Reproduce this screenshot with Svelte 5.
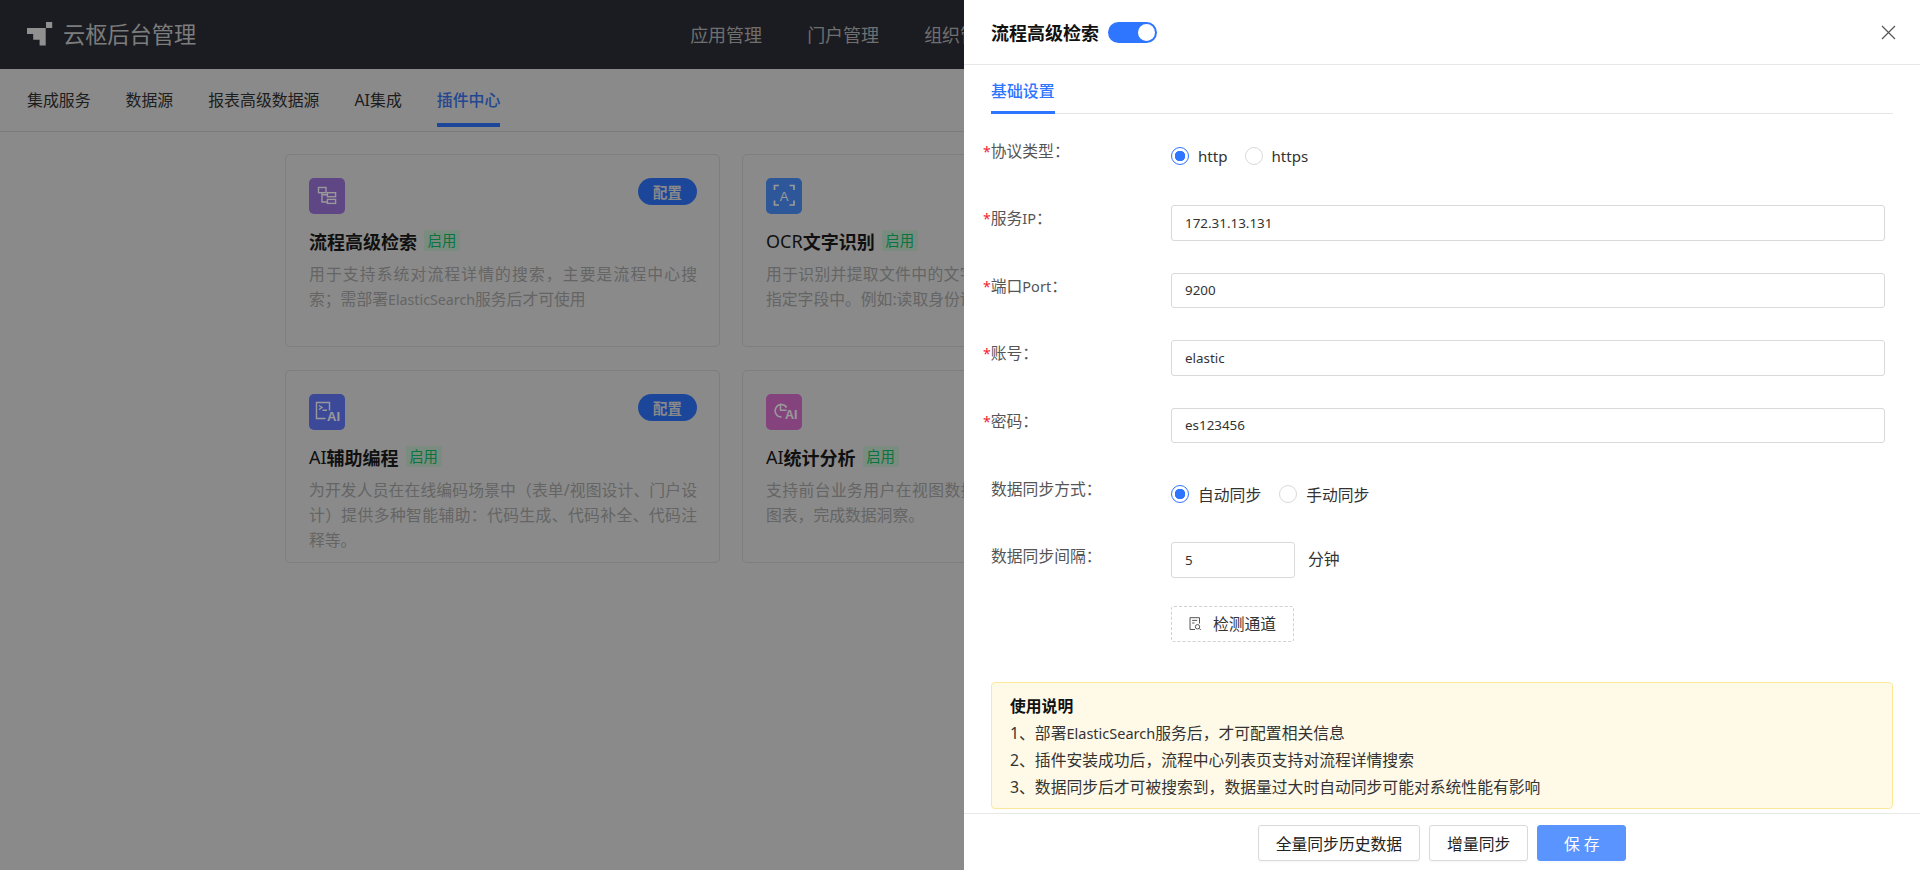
<script>
  const tabs = ["集成服务", "数据源", "报表高级数据源", "AI集成", "插件中心"];
  const menus = ["应用管理", "门户管理", "组织管理"];

  const plugins = [
    {
      key: "search",
      color: "#9e76de",
      title: "流程高级检索",
      desc: "用于支持系统对流程详情的搜索，主要是流程中心搜索；需部署ElasticSearch服务后才可使用",
      config: true,
    },
    {
      key: "ocr",
      color: "#4e91ff",
      title: "OCR文字识别",
      desc: "用于识别并提取文件中的文字信息，并将其自动填入到指定字段中。例如:读取身份证信息。",
      config: false,
    },
    {
      key: "code",
      color: "#647bff",
      title: "AI辅助编程",
      desc: "为开发人员在在线编码场景中（表单/视图设计、门户设计）提供多种智能辅助：代码生成、代码补全、代码注释等。",
      config: true,
    },
    {
      key: "chart",
      color: "#de71d2",
      title: "AI统计分析",
      desc: "支持前台业务用户在视图数据中通过AI生成多种类统计图表，完成数据洞察。",
      config: false,
    },
  ];

  const fields = [
    { label: "服务IP：", value: "172.31.13.131" },
    { label: "端口Port：", value: "9200" },
    { label: "账号：", value: "elastic" },
    { label: "密码：", value: "es123456" },
  ];

  // latin runs are set a bit smaller than the cjk around them
  const runs = (s) => s.split(/([A-Za-z]{2,})/).filter(Boolean);
  const isLatin = (s) => /^[A-Za-z]+$/.test(s);

  let protocol = $state("http");
  let syncMode = $state("auto");
  let enabled = $state(true);
</script>

{#snippet mixed(text)}{#each runs(text) as r}<span class:latin={isLatin(r)}>{r}</span>{/each}{/snippet}

<div class="page">
  <header class="topbar">
    <div class="brand">
      <svg width="26" height="24" viewBox="0 0 26 24" fill="#f0f0f0">
        <path d="M0 6H18.7V23.5H12.6V17.7H6.2V12H0Z" />
        <rect x="19" y="0" width="6.2" height="6" />
      </svg>
      <span>云枢后台管理</span>
    </div>
    <nav class="menu">
      {#each menus as item}
        <span>{item}</span>
      {/each}
    </nav>
  </header>

  <div class="subtabs">
    {#each tabs as tab, i}
      <span class="subtab" class:active={i === 4}>{tab}</span>
    {/each}
  </div>

  <main class="grid">
    {#each plugins as p}
      <section class="card">
        <div class="card-head">
          <div class="plugin-icon" style="background:{p.color}">
            <svg width="36" height="36" viewBox="0 0 36 36" fill="none" stroke="#fff" stroke-width="1.4">
              {#if p.key === "search"}
                <rect x="9.5" y="9.5" width="7.5" height="5.2" />
                <path d="M13 14.7V24H18.3M13 16.8H18.3" />
                <rect x="18.4" y="14.7" width="8.2" height="4" />
                <rect x="18.4" y="21.4" width="8.2" height="4" />
              {:else if p.key === "ocr"}
                <path d="M8.5 12V7.5H13M23.5 7.5H28V12M28 22.5V27H23.5M13 27H8.5V22.5" stroke-width="1.7" />
                <text x="18.2" y="22.5" text-anchor="middle" class="glyph" font-size="13">A</text>
              {:else if p.key === "code"}
                <path d="M20.5 16.5V8.5H7.5V24.5H16.5M10 11.5L13 13.5L10 15.5M13.5 16.3H18" />
                <text x="18" y="26.5" class="glyph bold" font-size="13">AI</text>
              {:else}
                <path d="M20.6 13.5A6.2 6.2 0 1 0 15.5 23M14.5 9.5V16.2H20.5" stroke-width="1.5" />
                <text x="19" y="24.5" class="glyph bold" font-size="12.5">AI</text>
              {/if}
            </svg>
          </div>
          {#if p.config}
            <button class="config">配置</button>
          {/if}
        </div>
        <h3 class="card-title">{@render mixed(p.title)}<em class="status">启用</em></h3>
        <p class="card-desc">{@render mixed(p.desc)}</p>
      </section>
    {/each}
  </main>
</div>

<div class="mask"></div>

<aside class="drawer">
  <div class="drawer-head">
    <strong>流程高级检索</strong>
    <button class="switch" class:off={!enabled} aria-label="启用" onclick={() => (enabled = !enabled)}>
      <i></i>
    </button>
    <button class="close" aria-label="关闭">
      <svg width="15" height="15" viewBox="0 0 15 15" stroke="#555" stroke-width="1.2" fill="none">
        <path d="M1 1L14 14M14 1L1 14" />
      </svg>
    </button>
  </div>

  <div class="drawer-body">
    <div class="drawer-tabs"><span>基础设置</span></div>

    <div class="row">
      <label class="field-label"><b>*</b>协议类型：</label>
      <div class="radios">
        {#each ["http", "https"] as opt}
          <button class="radio proto" class:checked={protocol === opt} onclick={() => (protocol = opt)}>
            <i></i>{opt}
          </button>
        {/each}
      </div>
    </div>

    {#each fields as f}
      <div class="row">
        <label class="field-label"><b>*</b>{@render mixed(f.label)}</label>
        <input class="text" value={f.value} />
      </div>
    {/each}

    <div class="row">
      <label class="field-label plain">数据同步方式：</label>
      <div class="radios wide">
        <button class="radio" class:checked={syncMode === "auto"} onclick={() => (syncMode = "auto")}>
          <i></i>自动同步
        </button>
        <button class="radio" class:checked={syncMode === "manual"} onclick={() => (syncMode = "manual")}>
          <i></i>手动同步
        </button>
      </div>
    </div>

    <div class="row short">
      <label class="field-label plain">数据同步间隔：</label>
      <input class="text number" value="5" />
      <span class="unit">分钟</span>
    </div>

    <div class="row check">
      <button class="dashed">
        <svg width="13" height="14" viewBox="0 0 13 14" fill="none" stroke="#555" stroke-width="1">
          <path d="M6 12.5H1V0.7H10.5V6.5M3.2 3.4H8.2M3.2 6H5.5" />
          <circle cx="8.5" cy="9.8" r="2.2" />
          <path d="M10.2 11.4L11.8 13" />
        </svg>
        检测通道
      </button>
    </div>

    <div class="notice">
      <h4>使用说明</h4>
      <p>{@render mixed("1、部署ElasticSearch服务后，才可配置相关信息")}</p>
      <p>2、插件安装成功后，流程中心列表页支持对流程详情搜索</p>
      <p>3、数据同步后才可被搜索到，数据量过大时自动同步可能对系统性能有影响</p>
    </div>
  </div>

  <div class="drawer-foot">
    <button class="btn">全量同步历史数据</button>
    <button class="btn">增量同步</button>
    <button class="btn primary">保 存</button>
  </div>
</aside>

<style>
  :global(body) {
    margin: 0;
    overflow: hidden;
    font-family: "Noto Sans", "Noto Sans CJK SC", sans-serif;
    color: #333;
  }
  button {
    font: inherit;
    cursor: pointer;
  }
  .latin {
    font-size: 0.92em;
  }

  .page {
    height: 100vh;
    background: #e6e6e6;
  }
  .topbar {
    height: 69px;
    display: flex;
    align-items: center;
    padding: 0 27px 2px;
    background: #2d2f39;
    box-sizing: border-box;
  }
  .brand {
    display: flex;
    align-items: center;
    gap: 10px;
    color: #cfcfcf;
    font-size: 22.2px;
    white-space: nowrap;
  }
  .menu {
    display: flex;
    gap: 45px;
    margin-left: 494px;
    color: #b9b9b9;
    font-size: 18px;
    white-space: nowrap;
  }

  .subtabs {
    height: 62px;
    display: flex;
    gap: 35px;
    padding: 0 27px;
    border-bottom: 1px solid #cdcdcd;
  }
  .subtab {
    box-sizing: border-box;
    height: 58px;
    line-height: 62px;
    font-size: 15.9px;
    color: #333;
  }
  .subtab.active {
    color: #3b76f0;
    font-weight: 500;
    border-bottom: 4px solid #2f76ff;
  }

  .grid {
    width: 1350px;
    margin: 22px auto 0;
    display: grid;
    grid-template-columns: 435px 434px;
    grid-auto-rows: 193px;
    gap: 23px 22px;
  }
  .card {
    box-sizing: border-box;
    padding: 23px 22px 23px 23px;
    border: 1px solid #d2d2d2;
    border-radius: 5px;
  }
  .card-head {
    display: flex;
    justify-content: space-between;
    align-items: flex-start;
  }
  .plugin-icon {
    width: 36px;
    height: 36px;
    border-radius: 5px;
  }
  .plugin-icon svg {
    display: block;
  }
  .glyph {
    fill: #fff;
    stroke: none;
    font-family: "Liberation Sans", sans-serif;
  }
  .glyph.bold {
    font-weight: 700;
  }
  .config {
    width: 59px;
    height: 27px;
    padding: 0;
    border: 0;
    border-radius: 14px;
    background: #2f76ff;
    color: #e4e4e4;
    font-size: 14.4px;
    font-weight: 700;
  }
  .card-title {
    display: flex;
    align-items: center;
    margin: 16px 0 0;
    height: 21px;
    font-size: 18px;
    font-weight: 600;
    color: #1c1c1c;
  }
  .card-title .latin {
    font-size: 1em;
    font-weight: 400;
  }
  .status {
    margin-left: 7px;
    padding: 0 3.6px;
    height: 21px;
    line-height: 21px;
    font-size: 14.4px;
    font-style: normal;
    font-weight: 400;
    color: #12c268;
    background: #cbe9d5;
    border-radius: 2px;
  }
  .card-desc {
    margin: 11px 0 0;
    font-size: 15.8px;
    line-height: 25px;
    text-align: justify;
    color: #a8a8a8;
  }
  .card-desc .latin {
    font-size: 0.9em;
  }

  .mask {
    position: fixed;
    inset: 0;
    background: rgba(0, 0, 0, 0.4);
  }

  .drawer {
    position: fixed;
    top: 0;
    right: 0;
    width: 956px;
    height: 100vh;
    display: flex;
    flex-direction: column;
    background: #fff;
  }
  .drawer-head {
    height: 65px;
    flex: none;
    box-sizing: border-box;
    display: flex;
    align-items: center;
    padding: 0 24px 0 27px;
    border-bottom: 1px solid #e8e8e8;
  }
  .drawer-head strong {
    font-size: 18px;
    font-weight: 600;
    color: #111;
  }
  .switch {
    position: relative;
    width: 49px;
    height: 21px;
    margin-left: 9px;
    padding: 0;
    border: 0;
    border-radius: 11px;
    background: #2e75ff;
  }
  .switch i {
    position: absolute;
    top: 2px;
    right: 2px;
    width: 17px;
    height: 17px;
    border-radius: 50%;
    background: #fff;
  }
  .switch.off {
    background: #bbb;
  }
  .switch.off i {
    right: 30px;
  }
  .close {
    margin-left: auto;
    padding: 0;
    border: 0;
    background: none;
    line-height: 0;
  }

  .drawer-body {
    flex: 1;
    min-height: 0;
    padding: 0 27px;
    border-bottom: 1px solid #e8e8e8;
    overflow: hidden;
  }
  .drawer-tabs {
    height: 48px;
    margin-bottom: 24px;
    border-bottom: 1px solid #e4e4e4;
  }
  .drawer-tabs span {
    display: inline-block;
    box-sizing: border-box;
    height: 49px;
    line-height: 53px;
    font-size: 15.9px;
    font-weight: 500;
    color: #2e75ff;
    border-bottom: 3px solid #2e75ff;
  }

  .row {
    display: flex;
    align-items: center;
    height: 35.4px;
    margin-bottom: 32px;
    padding-right: 8px;
  }
  .field-label {
    flex: none;
    width: 180px;
    align-self: flex-start;
    line-height: 27px;
    font-size: 15.8px;
    color: #555;
  }
  .field-label.plain {
    line-height: 29px;
  }
  .field-label b {
    margin-left: -8px;
    color: #f5222d;
    font-weight: 400;
    font-size: 14px;
  }

  .radios {
    display: flex;
    gap: 17px;
    padding-top: 1px;
  }
  .radios.wide {
    gap: 18px;
    padding-top: 3px;
  }
  .radio {
    display: flex;
    align-items: center;
    gap: 9px;
    padding: 0;
    border: 0;
    background: none;
    font-size: 15.8px;
    color: #333;
  }
  .radio.proto {
    font-size: 15.1px;
  }
  .radio i {
    box-sizing: border-box;
    width: 18px;
    height: 18px;
    border: 1px solid #d9d9d9;
    border-radius: 50%;
  }
  .radio.checked i {
    border-color: #2e75ff;
    background: radial-gradient(circle, #2e75ff 0 5px, #fff 5.5px);
  }

  .text {
    flex: 1;
    box-sizing: border-box;
    height: 35.4px;
    padding: 0 13px;
    border: 1px solid #d9d9d9;
    border-radius: 3px;
    outline: none;
    font: inherit;
    font-size: 13.4px;
    color: #333;
  }
  .text.number {
    flex: none;
    width: 124px;
  }
  .unit {
    margin: 0 0 3px 13px;
    font-size: 15.8px;
    color: #333;
  }

  .row.short {
    margin-bottom: 28px;
  }
  .row.check {
    height: 36px;
    padding-left: 180px;
    margin-bottom: 40px;
  }
  .dashed {
    display: flex;
    align-items: center;
    justify-content: center;
    gap: 11px;
    box-sizing: border-box;
    width: 123px;
    height: 36px;
    padding: 0;
    background: #fff;
    border: 1px dashed #d0d0d0;
    border-radius: 3px;
    font-size: 15.8px;
    color: #333;
  }

  .notice {
    box-sizing: border-box;
    height: 127px;
    padding: 10px 18px;
    background: #fffae8;
    border: 1px solid #fde89a;
    border-radius: 4px;
    font-size: 15.8px;
    line-height: 27px;
    color: #333;
  }
  .notice h4 {
    margin: 0;
    font-size: 15.8px;
    font-weight: 600;
    color: #111;
  }
  .notice p {
    margin: 0;
  }

  .drawer-foot {
    flex: none;
    height: 56px;
    box-sizing: border-box;
    display: flex;
    justify-content: center;
    gap: 9px;
    padding-top: 11px;
  }
  .btn {
    height: 36px;
    padding: 0 17px;
    border: 1px solid #d9d9d9;
    border-radius: 3px;
    background: #fff;
    font-size: 15.8px;
    color: #222;
    box-shadow: 0 2px 0 rgba(0, 0, 0, 0.02);
  }
  .btn.primary {
    width: 89px;
    background: #5a94ff;
    border-color: #5a94ff;
    color: #fff;
  }
</style>
